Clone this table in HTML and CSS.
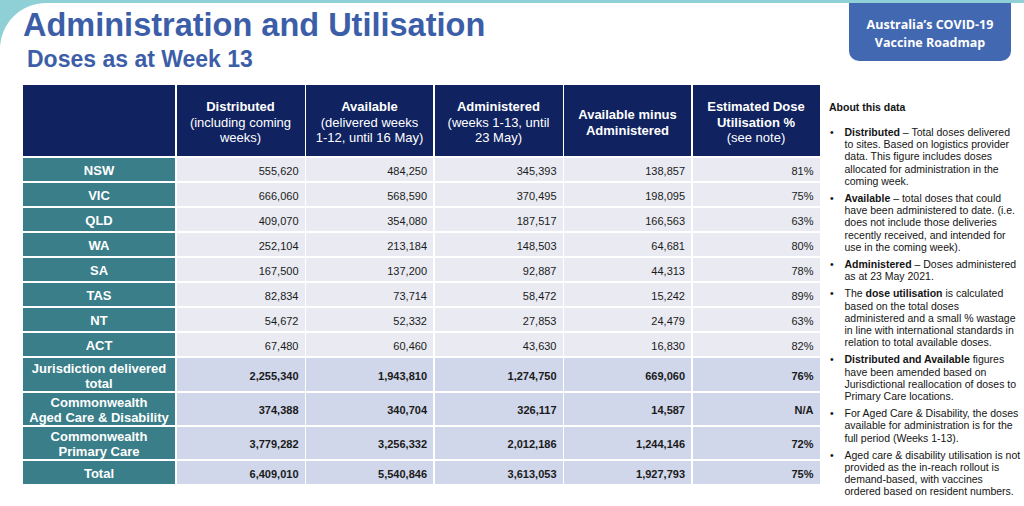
FILE: index.html
```html
<!DOCTYPE html>
<html lang="en">
<head>
<meta charset="utf-8">
<title>Administration and Utilisation</title>
<link rel="stylesheet" href="styles.css">
</head>
<body>
<div class="page">
  <header class="top">
    <div class="titles">
      <h1 class="title">Administration and Utilisation</h1>
      <h2 class="subtitle">Doses as at Week 13</h2>
    </div>
    <div class="badge">Australia’s COVID-19<br>Vaccine Roadmap</div>
  </header>
  <main class="content">
    <div class="grid">
      <div class="hd"></div>
      <div class="hd"><span><b>Distributed</b><br>(including coming<br>weeks)</span></div>
      <div class="hd"><span><b>Available</b><br>(delivered weeks<br>1-12, until 16 May)</span></div>
      <div class="hd"><span><b>Administered</b><br>(weeks 1-13, until<br>23 May)</span></div>
      <div class="hd"><span><b>Available minus<br>Administered</b></span></div>
      <div class="hd"><span><b>Estimated Dose<br>Utilisation %</b><br>(see note)</span></div>

      <div class="lbl">NSW</div><div class="num">555,620</div><div class="num">484,250</div><div class="num">345,393</div><div class="num">138,857</div><div class="num">81%</div>
      <div class="lbl">VIC</div><div class="num">666,060</div><div class="num">568,590</div><div class="num">370,495</div><div class="num">198,095</div><div class="num">75%</div>
      <div class="lbl">QLD</div><div class="num">409,070</div><div class="num">354,080</div><div class="num">187,517</div><div class="num">166,563</div><div class="num">63%</div>
      <div class="lbl">WA</div><div class="num">252,104</div><div class="num">213,184</div><div class="num">148,503</div><div class="num">64,681</div><div class="num">80%</div>
      <div class="lbl">SA</div><div class="num">167,500</div><div class="num">137,200</div><div class="num">92,887</div><div class="num">44,313</div><div class="num">78%</div>
      <div class="lbl">TAS</div><div class="num">82,834</div><div class="num">73,714</div><div class="num">58,472</div><div class="num">15,242</div><div class="num">89%</div>
      <div class="lbl">NT</div><div class="num">54,672</div><div class="num">52,332</div><div class="num">27,853</div><div class="num">24,479</div><div class="num">63%</div>
      <div class="lbl">ACT</div><div class="num">67,480</div><div class="num">60,460</div><div class="num">43,630</div><div class="num">16,830</div><div class="num">82%</div>

      <div class="lbl"><span>Jurisdiction delivered<br>total</span></div><div class="num sum">2,255,340</div><div class="num sum">1,943,810</div><div class="num sum">1,274,750</div><div class="num sum">669,060</div><div class="num sum">76%</div>
      <div class="lbl"><span>Commonwealth<br>Aged Care &amp; Disability</span></div><div class="num sum">374,388</div><div class="num sum">340,704</div><div class="num sum">326,117</div><div class="num sum">14,587</div><div class="num sum">N/A</div>
      <div class="lbl"><span>Commonwealth<br>Primary Care</span></div><div class="num sum">3,779,282</div><div class="num sum">3,256,332</div><div class="num sum">2,012,186</div><div class="num sum">1,244,146</div><div class="num sum">72%</div>
      <div class="lbl">Total</div><div class="num sum">6,409,010</div><div class="num sum">5,540,846</div><div class="num sum">3,613,053</div><div class="num sum">1,927,793</div><div class="num sum">75%</div>
    </div>
    <aside class="about">
      <h3 class="about-title">About this data</h3>
      <ul class="notes">
        <li><span><b>Distributed</b> – Total doses delivered<br>to sites. Based on logistics provider<br>data. This figure includes doses<br>allocated for administration in the<br>coming week.</span></li>
        <li><span><b>Available</b> – total doses that could<br>have been administered to date. (i.e.<br>does not include those deliveries<br>recently received, and intended for<br>use in the coming week).</span></li>
        <li><span><b>Administered</b> – Doses administered<br>as at 23 May 2021.</span></li>
        <li><span>The <b>dose utilisation</b> is calculated<br>based on the total doses<br>administered and a small % wastage<br>in line with international standards in<br>relation to total available doses.</span></li>
        <li><span><b>Distributed and Available</b> figures<br>have been amended based on<br>Jurisdictional reallocation of doses to<br>Primary Care locations.</span></li>
        <li><span>For Aged Care &amp; Disability, the doses<br>available for administration is for the<br>full period (Weeks 1-13).</span></li>
        <li><span>Aged care &amp; disability utilisation is not<br>provided as the in-reach rollout is<br>demand-based, with vaccines<br>ordered based on resident numbers.</span></li>
      </ul>
    </aside>
  </main>
</div>
</body>
</html>
```
FILE: styles.css
```css
html, body {
  margin: 0;
  padding: 0;
}

body {
  background: #8fd0d7;
  font-family: "Liberation Sans", Arial, sans-serif;
  color: #141414;
  width: 1024px;
  height: 506px;
  overflow: hidden;
}

.page {
  margin-top: 3px;
  height: 503px;
  box-sizing: border-box;
  background: #ffffff;
  border-top-left-radius: 46px;
  padding-left: 23px;
}

.top {
  display: flex;
  justify-content: space-between;
  align-items: flex-start;
  height: 68px;
}

.titles {
  padding-top: 5.5px;
}

.title {
  margin: 0;
  font-size: 32.5px;
  line-height: 32px;
  font-weight: 700;
  color: #3c5ea8;
}

.subtitle {
  margin: 7.5px 0 0 4px;
  font-size: 23px;
  line-height: 23px;
  font-weight: 700;
  color: #3c5ea8;
}

.badge {
  width: 162px;
  height: 58px;
  margin-right: 13px;
  box-sizing: border-box;
  padding-top: 4px;
  background: #4268b2;
  border-radius: 0 0 10px 10px;
  color: #ffffff;
  font-family: "Open Sans", "Liberation Sans", sans-serif;
  font-weight: 700;
  font-size: 12.5px;
  line-height: 17.7px;
  display: flex;
  align-items: center;
  justify-content: center;
  text-align: center;
}

.content {
  display: flex;
  align-items: flex-start;
  margin-top: 14px;
}

.grid {
  display: grid;
  grid-template-columns: 152px 128px 127px 128px 127px 127px;
  grid-template-rows: 71px repeat(8, 23px) 33px 32px 32px 23px;
  column-gap: 1.5px;
  row-gap: 2px;
  flex: none;
}

.hd {
  background: #10225f;
  color: #ffffff;
  font-size: 13px;
  line-height: 15.5px;
  text-align: center;
  display: flex;
  align-items: center;
  justify-content: center;
  padding-top: 4px;
  box-sizing: border-box;
}

.lbl {
  background: #3a7e89;
  color: #ffffff;
  font-size: 13px;
  line-height: 15px;
  font-weight: 700;
  text-align: center;
  display: flex;
  align-items: center;
  justify-content: center;
  padding-top: 2px;
  box-sizing: border-box;
}

.num {
  background: #e9eaf2;
  color: #1a1a1a;
  font-size: 11px;
  display: flex;
  align-items: center;
  justify-content: flex-end;
  padding: 2px 6px 0 0;
  box-sizing: border-box;
}

.num.sum {
  background: #d0d7ea;
  font-weight: 700;
}

.about {
  margin-left: 9.5px;
  padding-top: 16.4px;
  font-size: 10.5px;
  line-height: 12.2px;
  color: #141414;
  white-space: nowrap;
}

.about-title {
  margin: 0 0 12.3px 0;
  font-size: 10.5px;
  line-height: 12.2px;
  font-weight: 700;
}

.notes {
  list-style: none;
  margin: 0;
  padding: 0;
}

.notes li {
  display: flex;
  margin-top: 5px;
}

.notes li:first-child {
  margin-top: 0;
}

.notes li::before {
  content: "•";
  flex: none;
  width: 15.5px;
  padding-left: 1px;
  box-sizing: border-box;
}
```
